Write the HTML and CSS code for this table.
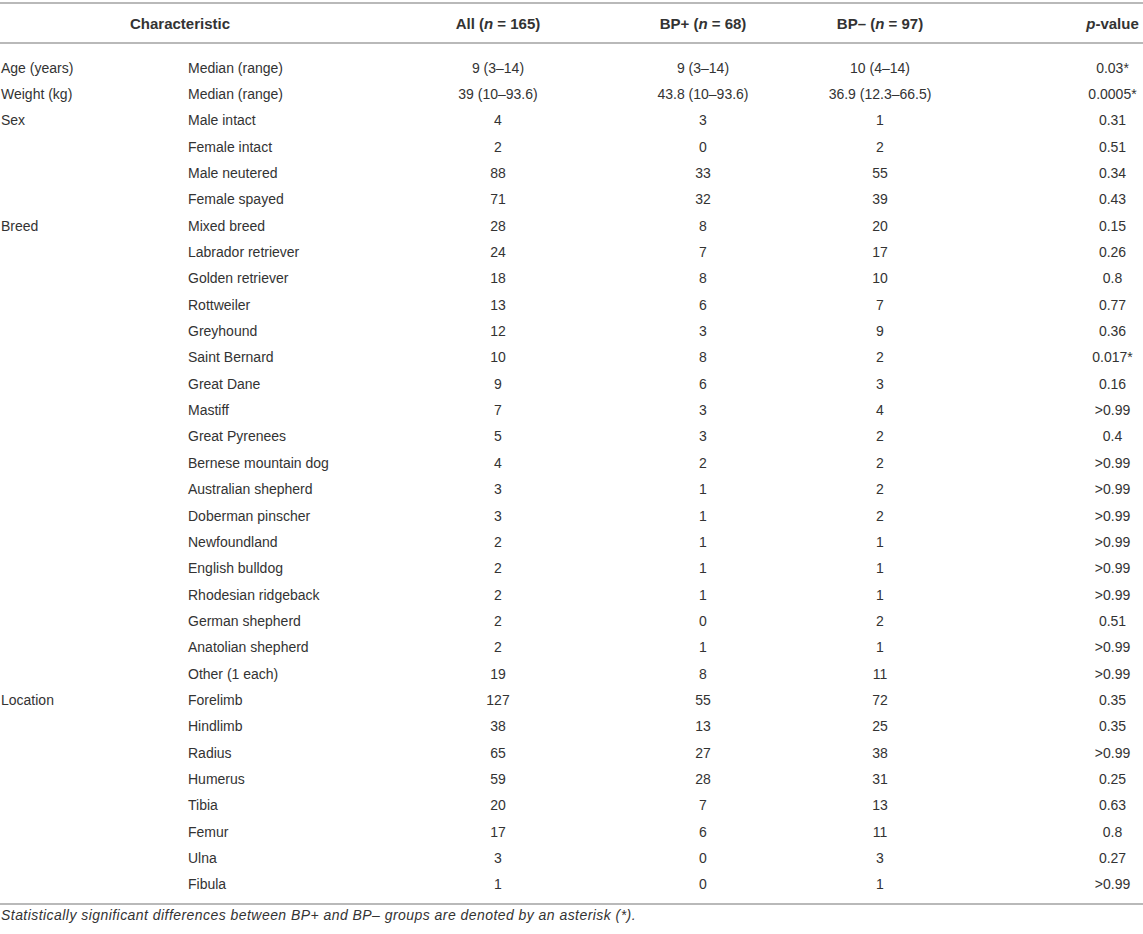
FILE: index.html
```html
<!DOCTYPE html>
<html lang="en">
<head>
<meta charset="utf-8">
<title>Characteristics table</title>
<link rel="stylesheet" href="styles.css">
</head>
<body>
<div class="page">
<table class="tbl">
  <colgroup>
    <col class="c1"><col class="c2"><col class="c3"><col class="c4"><col class="c5"><col class="c6">
  </colgroup>
  <thead>
    <tr>
      <th colspan="2">Characteristic</th>
      <th>All (<i>n</i> = 165)</th>
      <th>BP+ (<i>n</i> = 68)</th>
      <th>BP– (<i>n</i> = 97)</th>
      <th class="pcol"><i>p</i>-value</th>
    </tr>
  </thead>
  <tbody>
    <tr class="first"><td class="lab">Age (years)</td><td class="sub">Median (range)</td><td>9 (3–14)</td><td>9 (3–14)</td><td>10 (4–14)</td><td class="pcol">0.03*</td></tr>
    <tr><td class="lab">Weight (kg)</td><td class="sub">Median (range)</td><td>39 (10–93.6)</td><td>43.8 (10–93.6)</td><td>36.9 (12.3–66.5)</td><td class="pcol">0.0005*</td></tr>
    <tr><td class="lab">Sex</td><td class="sub">Male intact</td><td>4</td><td>3</td><td>1</td><td class="pcol">0.31</td></tr>
    <tr><td class="lab"></td><td class="sub">Female intact</td><td>2</td><td>0</td><td>2</td><td class="pcol">0.51</td></tr>
    <tr><td class="lab"></td><td class="sub">Male neutered</td><td>88</td><td>33</td><td>55</td><td class="pcol">0.34</td></tr>
    <tr><td class="lab"></td><td class="sub">Female spayed</td><td>71</td><td>32</td><td>39</td><td class="pcol">0.43</td></tr>
    <tr><td class="lab">Breed</td><td class="sub">Mixed breed</td><td>28</td><td>8</td><td>20</td><td class="pcol">0.15</td></tr>
    <tr><td class="lab"></td><td class="sub">Labrador retriever</td><td>24</td><td>7</td><td>17</td><td class="pcol">0.26</td></tr>
    <tr><td class="lab"></td><td class="sub">Golden retriever</td><td>18</td><td>8</td><td>10</td><td class="pcol">0.8</td></tr>
    <tr><td class="lab"></td><td class="sub">Rottweiler</td><td>13</td><td>6</td><td>7</td><td class="pcol">0.77</td></tr>
    <tr><td class="lab"></td><td class="sub">Greyhound</td><td>12</td><td>3</td><td>9</td><td class="pcol">0.36</td></tr>
    <tr><td class="lab"></td><td class="sub">Saint Bernard</td><td>10</td><td>8</td><td>2</td><td class="pcol">0.017*</td></tr>
    <tr><td class="lab"></td><td class="sub">Great Dane</td><td>9</td><td>6</td><td>3</td><td class="pcol">0.16</td></tr>
    <tr><td class="lab"></td><td class="sub">Mastiff</td><td>7</td><td>3</td><td>4</td><td class="pcol">&gt;0.99</td></tr>
    <tr><td class="lab"></td><td class="sub">Great Pyrenees</td><td>5</td><td>3</td><td>2</td><td class="pcol">0.4</td></tr>
    <tr><td class="lab"></td><td class="sub">Bernese mountain dog</td><td>4</td><td>2</td><td>2</td><td class="pcol">&gt;0.99</td></tr>
    <tr><td class="lab"></td><td class="sub">Australian shepherd</td><td>3</td><td>1</td><td>2</td><td class="pcol">&gt;0.99</td></tr>
    <tr><td class="lab"></td><td class="sub">Doberman pinscher</td><td>3</td><td>1</td><td>2</td><td class="pcol">&gt;0.99</td></tr>
    <tr><td class="lab"></td><td class="sub">Newfoundland</td><td>2</td><td>1</td><td>1</td><td class="pcol">&gt;0.99</td></tr>
    <tr><td class="lab"></td><td class="sub">English bulldog</td><td>2</td><td>1</td><td>1</td><td class="pcol">&gt;0.99</td></tr>
    <tr><td class="lab"></td><td class="sub">Rhodesian ridgeback</td><td>2</td><td>1</td><td>1</td><td class="pcol">&gt;0.99</td></tr>
    <tr><td class="lab"></td><td class="sub">German shepherd</td><td>2</td><td>0</td><td>2</td><td class="pcol">0.51</td></tr>
    <tr><td class="lab"></td><td class="sub">Anatolian shepherd</td><td>2</td><td>1</td><td>1</td><td class="pcol">&gt;0.99</td></tr>
    <tr><td class="lab"></td><td class="sub">Other (1 each)</td><td>19</td><td>8</td><td>11</td><td class="pcol">&gt;0.99</td></tr>
    <tr><td class="lab">Location</td><td class="sub">Forelimb</td><td>127</td><td>55</td><td>72</td><td class="pcol">0.35</td></tr>
    <tr><td class="lab"></td><td class="sub">Hindlimb</td><td>38</td><td>13</td><td>25</td><td class="pcol">0.35</td></tr>
    <tr><td class="lab"></td><td class="sub">Radius</td><td>65</td><td>27</td><td>38</td><td class="pcol">&gt;0.99</td></tr>
    <tr><td class="lab"></td><td class="sub">Humerus</td><td>59</td><td>28</td><td>31</td><td class="pcol">0.25</td></tr>
    <tr><td class="lab"></td><td class="sub">Tibia</td><td>20</td><td>7</td><td>13</td><td class="pcol">0.63</td></tr>
    <tr><td class="lab"></td><td class="sub">Femur</td><td>17</td><td>6</td><td>11</td><td class="pcol">0.8</td></tr>
    <tr><td class="lab"></td><td class="sub">Ulna</td><td>3</td><td>0</td><td>3</td><td class="pcol">0.27</td></tr>
    <tr class="last"><td class="lab"></td><td class="sub">Fibula</td><td>1</td><td>0</td><td>1</td><td class="pcol">&gt;0.99</td></tr>
  </tbody>
</table>
<p class="note">Statistically significant differences between BP+ and BP– groups are denoted by an asterisk (*).</p>
</div>
</body>
</html>
```

FILE: styles.css
```css
html, body {
  margin: 0;
  padding: 0;
  background: #ffffff;
}

.page {
  padding-top: 2px;
  font-family: "Liberation Sans", Arial, sans-serif;
  color: #333333;
}

.tbl {
  width: 1143px;
  table-layout: fixed;
  border-collapse: collapse;
  border-top: 2px solid #b9b9b9;
  border-bottom: 2px solid #b9b9b9;
  font-size: 14px;
}

.c1 { width: 188px; }
.c2 { width: 172px; }
.c3 { width: 276px; }
.c4 { width: 134px; }
.c5 { width: 220px; }
.c6 { width: 153px; }

.tbl thead th {
  height: 38px;
  padding: 0;
  font-size: 15px;
  font-weight: bold;
  text-align: center;
  vertical-align: middle;
  border-bottom: 2px solid #b9b9b9;
}

.tbl td {
  height: 26.35px;
  padding: 0;
  line-height: 16px;
  text-align: center;
  vertical-align: middle;
  white-space: nowrap;
}

.tbl td.lab,
.tbl td.sub {
  text-align: left;
}

.tbl td.lab {
  padding-left: 1px;
}

.tbl .pcol {
  padding-left: 92px;
}

.tbl tr.first td {
  padding-top: 10.5px;
}

.tbl tr.last td {
  padding-bottom: 5px;
}

.note {
  margin: 2px 0 0 0;
  font-size: 14px;
  letter-spacing: 0.45px;
  line-height: 16px;
  font-style: italic;
  padding-left: 1px;
}
```
